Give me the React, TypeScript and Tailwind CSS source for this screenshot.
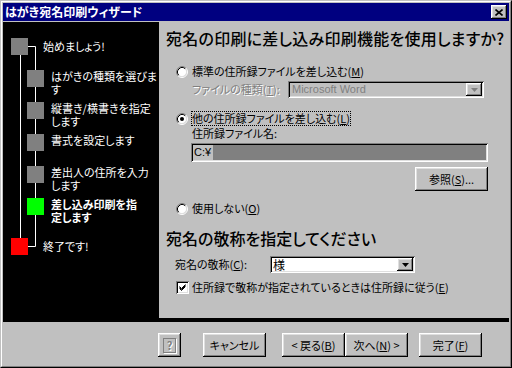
import React from "react";

const raised =
  "shadow-[inset_-1px_-1px_#000,inset_1px_1px_#fff,inset_-2px_-2px_#808080,inset_2px_2px_#dfdfdf]";
const sunken =
  "shadow-[inset_1px_1px_#808080,inset_-1px_-1px_#fff,inset_2px_2px_#000,inset_-2px_-2px_#dfdfdf]";

function Radio({ checked }: { checked?: boolean }) {
  return (
    <svg width="12" height="12" viewBox="0 0 12 12" className="shrink-0">
      <circle cx="6" cy="6" r="4.5" fill="#fff" />
      <path d="M2.11 9.89 A5.5 5.5 0 0 1 9.89 2.11" stroke="#808080" strokeWidth="1" fill="none" />
      <path d="M9.89 2.11 A5.5 5.5 0 0 1 2.11 9.89" stroke="#fff" strokeWidth="1" fill="none" />
      <path d="M2.82 9.18 A4.5 4.5 0 0 1 9.18 2.82" stroke="#000" strokeWidth="1" fill="none" />
      <path d="M9.18 2.82 A4.5 4.5 0 0 1 2.82 9.18" stroke="#dfdfdf" strokeWidth="1" fill="none" />
      {checked && <circle cx="6" cy="6" r="2" fill="#000" />}
    </svg>
  );
}

function Arrow({ disabled }: { disabled?: boolean }) {
  return (
    <div className={`w-[16px] h-full bg-[#c0c0c0] flex items-center justify-center ${raised}`}>
      <svg width="7" height="4" viewBox="0 0 7 4">
        <path d="M0 0 H7 L3.5 4 Z" fill={disabled ? "#808080" : "#000"} />
      </svg>
    </div>
  );
}

function Btn({ children, className }: { children: React.ReactNode; className?: string }) {
  return (
    <div
      className={`h-[24px] bg-[#c0c0c0] flex items-center justify-center text-black whitespace-nowrap ${raised} ${className ?? ""}`}
    >
      {children}
    </div>
  );
}

function Sq({ color }: { color: string }) {
  return <div className={`w-[17px] h-[17px] shrink-0 ${color}`} />;
}

export default function App() {
  return (
    <div className="w-[512px] h-[368px] bg-[#c0c0c0] border border-t-[#c0c0c0] border-l-[#c0c0c0] border-r-black border-b-black font-['Noto_Sans_CJK_JP',sans-serif] [font-feature-settings:'palt'] text-[11px] leading-[13px] text-black overflow-hidden">
      <div className="w-full h-full border border-t-white border-l-white border-r-[#808080] border-b-[#808080] p-px flex flex-col">
        {/* title bar */}
        <div className="h-[18px] bg-[#000080] flex items-center justify-between pl-[2px] pr-[2px] shrink-0">
          <span className="text-white font-bold text-[12px] leading-[18px]">はがき宛名印刷ウィザード</span>
          <div className={`w-[16px] h-[14px] bg-[#c0c0c0] flex items-center justify-center ${raised}`}>
            <svg width="8" height="7" viewBox="0 0 8 7">
              <path d="M0.5 0.5 L7.5 6.5 M7.5 0.5 L0.5 6.5" stroke="#000" strokeWidth="1.6" />
            </svg>
          </div>
        </div>
        <div className="h-px shrink-0" />
        {/* main */}
        <div className="h-[300px] bg-black flex shrink-0">
          {/* left tree */}
          <div className="w-[156px] relative text-white">
            <svg className="absolute left-0 top-0" width="156" height="300">
              <path d="M17.5 33 V216 M25 24.5 H32.5 V224.5 H25" stroke="#fff" strokeWidth="1" fill="none" />
            </svg>
            <div className="relative flex flex-col pt-[16px]">
              <div className="h-[32px] flex items-start pl-[8px]">
                <Sq color="bg-[#808080]" />
                <span className="ml-[15px] mt-[2px] whitespace-nowrap">始めましょう!</span>
              </div>
              <div className="h-[32px] flex items-start pl-[24px]">
                <Sq color="bg-[#808080]" />
                <span className="ml-[7px] whitespace-nowrap">はがきの種類を選びま<br />す</span>
              </div>
              <div className="h-[32px] flex items-start pl-[24px]">
                <Sq color="bg-[#808080]" />
                <span className="ml-[7px] whitespace-nowrap">縦書き/横書きを指定<br />します</span>
              </div>
              <div className="h-[32px] flex items-start pl-[24px]">
                <Sq color="bg-[#808080]" />
                <span className="ml-[7px] whitespace-nowrap">書式を設定します</span>
              </div>
              <div className="h-[32px] flex items-start pl-[24px]">
                <Sq color="bg-[#808080]" />
                <span className="ml-[7px] whitespace-nowrap">差出人の住所を入力<br />します</span>
              </div>
              <div className="h-[40px] flex items-start pl-[24px]">
                <Sq color="bg-[#00ff00]" />
                <span className="ml-[7px] whitespace-nowrap font-bold">差し込み印刷を指<br />定します</span>
              </div>
              <div className="h-[32px] flex items-start pl-[8px]">
                <Sq color="bg-[#ff0000]" />
                <span className="ml-[15px] mt-[2px] whitespace-nowrap">終了です!</span>
              </div>
            </div>
          </div>
          {/* right panel */}
          <div className="flex-1 bg-[#c0c0c0] mb-[4px] flex flex-col">
            <div className="mt-[7px] ml-[7px] h-[18px] text-[16px] leading-[18px] font-medium tracking-[0.25px] whitespace-nowrap">
              宛名の印刷に差し込み印刷機能を使用しますか?
            </div>
            <div className="mt-[18px] ml-[17px] h-[13px] flex items-center">
              <Radio />
              <span className="ml-[4px] whitespace-nowrap">標準の住所録ファイルを差し込む(<u>M</u>)</span>
            </div>
            <div className="mt-[3px] ml-[33px] h-[17px] flex items-center">
              <span className="w-[96px] text-[#808080] [text-shadow:1px_1px_0_#fff] whitespace-nowrap">ファイルの種類(<u>T</u>):</span>
              <div className={`w-[196px] h-[17px] bg-[#c0c0c0] flex items-stretch p-[2px] ${sunken}`}>
                <span className="flex-1 pl-[2px] text-[#808080] leading-[13px] font-['Liberation_Sans',sans-serif]">Microsoft Word</span>
                <Arrow disabled />
              </div>
            </div>
            <div className="mt-[14px] ml-[17px] h-[13px] flex items-center">
              <Radio checked />
              <span className="ml-[4px] whitespace-nowrap outline outline-1 outline-dotted outline-black">他の住所録ファイルを差し込む(<u>L</u>)</span>
            </div>
            <div className="mt-[2px] ml-[33px] h-[13px] whitespace-nowrap">住所録ファイル名:</div>
            <div className={`mt-[3px] ml-[32px] w-[297px] h-[19px] bg-[#c0c0c0] flex items-center p-[2px] ${sunken}`}>
              <span className="pl-[1px] font-['Liberation_Sans',sans-serif]">C:¥</span>
              <div className="flex-1 h-[15px] bg-[#808080] ml-[2px]" />
            </div>
            <Btn className="mt-[5px] ml-[256px] w-[73px]">参照(<u>S</u>)...</Btn>
            <div className="mt-[11px] ml-[17px] h-[13px] flex items-center">
              <Radio />
              <span className="ml-[4px] whitespace-nowrap">使用しない(<u>O</u>)</span>
            </div>
            <div className="mt-[14px] ml-[7px] h-[18px] text-[16px] leading-[18px] font-medium whitespace-nowrap">
              宛名の敬称を指定してください
            </div>
            <div className="mt-[9px] ml-[16px] h-[17px] flex items-center">
              <span className="w-[95px] whitespace-nowrap">宛名の敬称(<u>C</u>):</span>
              <div className={`w-[145px] h-[17px] bg-white flex items-stretch p-[2px] ${sunken}`}>
                <span className="flex-1 pl-[1px] leading-[13px] text-[12px]">様</span>
                <Arrow />
              </div>
            </div>
            <div className="mt-[8px] ml-[17px] h-[13px] flex items-center">
              <div className={`w-[13px] h-[13px] bg-white flex items-center justify-center shrink-0 ${sunken}`}>
                <svg width="7" height="7" viewBox="0 0 7 7">
                  <path d="M0.5 2.5 L2.5 4.5 L6.5 0.5 M0.5 3.5 L2.5 5.5 L6.5 1.5 M0.5 4.5 L2.5 6.5 L6.5 2.5" stroke="#000" strokeWidth="1" fill="none" />
                </svg>
              </div>
              <span className="ml-[3px] whitespace-nowrap">住所録で敬称が指定されているときは住所録に従う(<u>E</u>)</span>
            </div>
          </div>
        </div>
        {/* bottom bar */}
        <div className="flex-1 flex items-start pt-[11px] pl-[155px]">
          <Btn className="w-[23px]">
            <div className="w-[13px] h-[15px] border border-[#808080] shadow-[1px_1px_0_#fff] flex items-center justify-center text-[#808080] font-bold text-[11px] leading-[11px] [text-shadow:1px_1px_0_#fff]">
              ?
            </div>
          </Btn>
          <Btn className="ml-[22px] w-[63px]">キャンセル</Btn>
          <Btn className="ml-[16px] w-[63px]">&lt; 戻る(<u>B</u>)</Btn>
          <Btn className="w-[63px]">次へ(<u>N</u>) &gt;</Btn>
          <Btn className="ml-[11px] w-[63px]">完了(<u>F</u>)</Btn>
        </div>
      </div>
    </div>
  );
}
